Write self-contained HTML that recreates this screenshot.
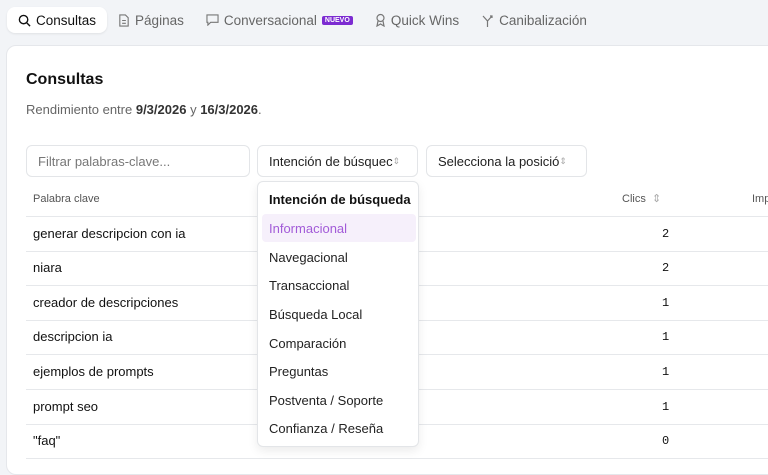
<!DOCTYPE html>
<html><head><meta charset="utf-8"><style>
*{box-sizing:border-box;margin:0;padding:0}
body{width:768px;height:460px;overflow:hidden;background:#f2f4f7;font-family:"Liberation Sans",sans-serif;color:#111;position:relative}
.tabs{position:absolute;top:7px;left:7px;display:flex;align-items:center;font-size:13.5px;color:#666}
.tab{height:26px;display:flex;align-items:center;gap:5px;padding:0 11px}
.tab.act{background:#fff;border-radius:8px;color:#111;box-shadow:0 1px 2px rgba(0,0,0,.08)}
.badge{background:#7c2bd1;color:#fff;font-size:7px;font-weight:bold;padding:1px 3px;border-radius:2px}
.card{position:absolute;left:6px;top:45px;width:780px;height:430px;background:#fff;border:1px solid #e5e7eb;border-radius:10px}
h1{position:absolute;left:26px;top:71px;font-size:16px;font-weight:bold}
.sub{position:absolute;left:26px;top:102px;font-size:13px;color:#666}
.sub b{color:#333}
.inp{position:absolute;top:145px;height:32px;border:1px solid #e3e5e8;border-radius:6px;font-size:13px;padding:0 11px;display:flex;align-items:center;color:#222;white-space:nowrap;overflow:hidden}
.row{position:absolute;left:26px;width:742px;height:34.6px;border-bottom:1px solid #e6e8eb;font-size:13px;display:flex;align-items:center;padding-left:7px}
.num{position:absolute;left:636px;font-family:"Liberation Mono",monospace;font-size:12px}
.dd{position:absolute;left:257px;top:181px;width:162px;height:266px;background:#fff;border:1px solid #e3e5e8;border-radius:6px;box-shadow:0 4px 10px rgba(0,0,0,.08);font-size:13px;color:#222}
.dd div{position:absolute;left:11px}
.hl{position:absolute;left:4px;top:32px;width:154px;height:28px;background:#f6f0fb;border-radius:4px}
</style></head><body>
<div class="tabs">
<div class="tab act"><svg width="13" height="13" viewBox="0 0 14 14" fill="none" stroke="#111" stroke-width="1.5"><circle cx="6" cy="6" r="4.5"/><path d="M9.5 9.5L13 13"/></svg>Consultas</div>
<div class="tab"><svg width="12" height="13" viewBox="0 0 12 14" fill="none" stroke="#777" stroke-width="1.2"><path d="M1.5 1h6l3 3v9h-9z M4 7h4M4 10h4"/></svg>Páginas</div>
<div class="tab"><svg width="13" height="12" viewBox="0 0 14 13" fill="none" stroke="#777" stroke-width="1.2"><path d="M1 1h12v8H5l-3 3V9H1z"/></svg>Conversacional <span class="badge">NUEVO</span></div>
<div class="tab"><svg width="11" height="14" viewBox="0 0 11 14" fill="none" stroke="#777" stroke-width="1.2"><circle cx="5.5" cy="5" r="3.5"/><path d="M3 8l-1 5 3.5-2 3.5 2-1-5"/></svg>Quick Wins</div>
<div class="tab"><svg width="13" height="13" viewBox="0 0 13 13" fill="none" stroke="#777" stroke-width="1.2"><path d="M6.5 13V7L2 2M6.5 7L11 2M9 2h2v2"/></svg>Canibalización</div>
</div>
<div class="card"></div>
<h1>Consultas</h1>
<div class="sub">Rendimiento entre <b>9/3/2026</b> y <b>16/3/2026</b>.</div>
<div class="inp" style="left:26px;width:224px;color:#777">Filtrar palabras-clave...</div>
<div class="inp" style="left:257px;width:161px">Intención de búsquec <span style="color:#aaa;font-size:9px">&#8661;</span></div>
<div class="inp" style="left:426px;width:161px">Selecciona la posició <span style="color:#aaa;font-size:9px">&#8661;</span></div>
<div class="row" style="top:182px;font-size:11px;color:#555">Palabra clave<span style="position:absolute;left:596px">Clics &nbsp;<span style="color:#aaa">&#8661;</span></span><span style="position:absolute;left:726px">Imp</span></div>
<div class="row" style="top:217px">generar descripcion con ia<span class="num">2</span></div>
<div class="row" style="top:251px">niara<span class="num">2</span></div>
<div class="row" style="top:286px">creador de descripciones<span class="num">1</span></div>
<div class="row" style="top:320px">descripcion ia<span class="num">1</span></div>
<div class="row" style="top:355px">ejemplos de prompts<span class="num">1</span></div>
<div class="row" style="top:390px">prompt seo<span class="num">1</span></div>
<div class="row" style="top:424px">"faq"<span class="num">0</span></div>
<div class="dd">
<div class="hl" style="left:4px"></div>
<div style="top:10px;font-weight:bold;color:#111">Intención de búsqueda</div>
<div style="top:39px;color:#a25bd8">Informacional</div>
<div style="top:68px">Navegacional</div>
<div style="top:96px">Transaccional</div>
<div style="top:125px">Búsqueda Local</div>
<div style="top:154px">Comparación</div>
<div style="top:182px">Preguntas</div>
<div style="top:211px">Postventa / Soporte</div>
<div style="top:239px">Confianza / Reseña</div>
</div>
</body></html>
